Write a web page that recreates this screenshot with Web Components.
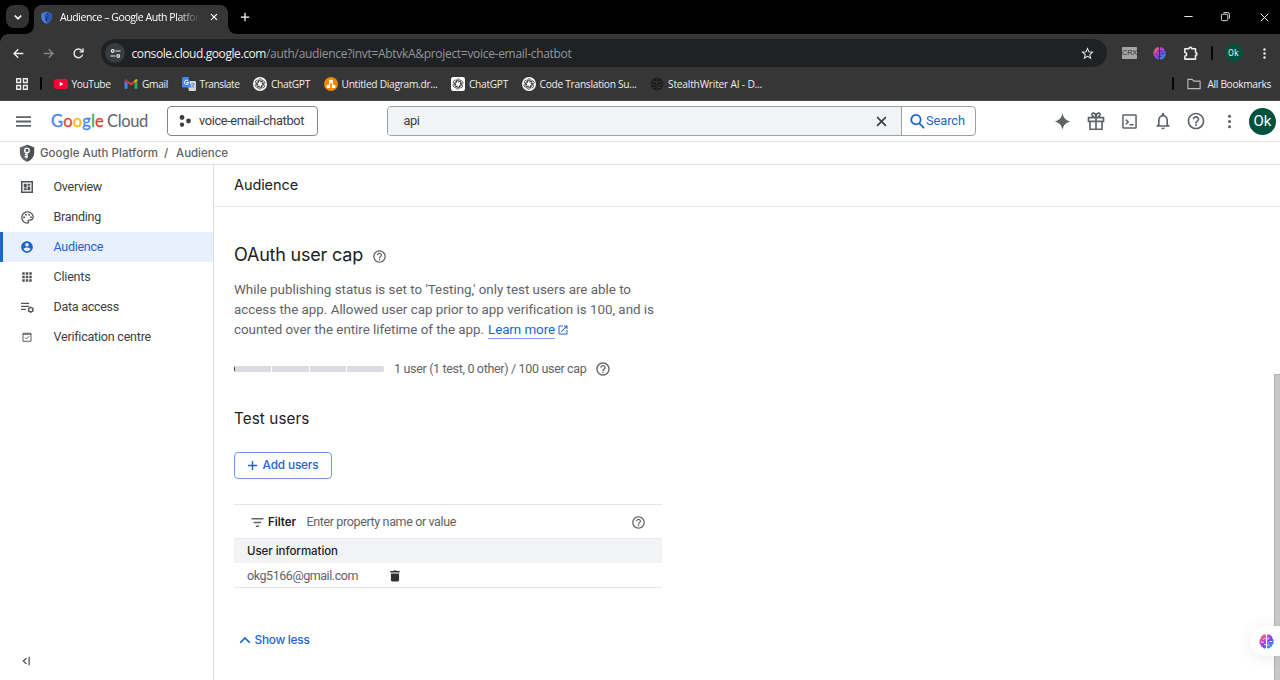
<!DOCTYPE html>
<html lang="en">
<head>
<meta charset="utf-8">
<title>Audience – Google Auth Platform</title>
<style>
body{margin:0;width:1280px;height:680px;overflow:hidden;background:#fff;font-family:Roboto,sans-serif}
</style>
</head>
<body>
<app-shell></app-shell>
<script>
const brain = id => `<defs><linearGradient id="${id}" x1="0" y1="0" x2="1" y2="1"><stop offset=".1" stop-color="#ff7a3c"/><stop offset=".35" stop-color="#c63fd8"/><stop offset=".62" stop-color="#6a4df0"/><stop offset=".9" stop-color="#20b4f5"/></linearGradient></defs>
<path fill="url(#${id})" d="M11 1.500C9.300-.3 6.600.3 6 2.500 3.500 2.700 2.300 5 3 7 .8 8 .2 10.300 1.200 12c-1 1.900-.3 4.400 1.800 5.200-.2 2.300 1.200 4 3.300 4.100.8 2.300 3.300 2.600 4.700.9zM13 1.500c1.700-1.800 4.600-1.200 5.200 1 2.500.2 3.700 2.500 3 4.500 2.200 1 2.800 3.300 1.800 5 1 1.900.3 4.400-1.800 5.200.2 2.300-1.200 4-3.300 4.100-.8 2.300-3.500 2.600-4.900.9z"/><g fill="none" stroke="var(--gap,#363636)" stroke-width="1.300"><path d="M11 7.500H8.500L6.500 9M3 13h5M11 17H8M13 8h2.500V5.500M21 12h-4l-2 2M13 17.500h4"/></g>`;
const knot = (bg, fg, r) => `<rect x="0" y="0" width="24" height="24" rx="${r}" fill="${bg}"/><g fill="none" stroke="${fg}" stroke-width="1.300">${[0,60,120,180,240,300].map(a=>`<path transform="rotate(${a} 12 12)" d="M9.200 10.300V6.500a3.500 3.500 0 0 1 6.600-1.500M9.200 7.500 12 5.900l4.200 2.400"/>`).join('')}</g>`;
const ICONS = {
 down:'<path d="m6.500 9.500 5.500 5.500 5.500-5.500" fill="none" stroke="currentColor" stroke-width="2.800"/>',
 close:'<path d="M5 5l14 14M19 5 5 19" fill="none" stroke="currentColor" stroke-width="var(--sw,2.200)"/>',
 plus:'<path d="M12 2v20M2 12h20" fill="none" stroke="currentColor" stroke-width="3"/>',
 shield:'<path d="M12 1 2.500 4.500V11c0 6 4 10.500 9.500 12.500 5.500-2 9.500-6.500 9.500-12.500V4.500z" fill="var(--a,#5f6368)"/><path d="M12 1v22.500C17.500 21.500 21.500 17 21.500 11V4.500z" fill="var(--b,#4b4f53)"/><circle cx="12" cy="8.500" r="3" fill="none" stroke="var(--c,#fff)" stroke-width="1.800"/><path d="M12 11.500V19M12 14H9M12 17H9" stroke="var(--c,#fff)" stroke-width="1.800"/>',
 min:'<path d="M3 12h18" stroke="currentColor" stroke-width="2"/>',
 restore:'<g fill="none" stroke="currentColor" stroke-width="1.900"><rect x="3" y="7" width="14" height="14" rx="2.500"/><path d="M7.500 3.500H17a3.500 3.500 0 0 1 3.500 3.500v9.500"/></g>',
 back:'<path d="M21 12H4M11.500 4 3.700 12l7.800 8" fill="none" stroke="currentColor" stroke-width="2.500"/>',
 fwd:'<path d="M3 12h17M12.500 4l7.800 8-7.800 8" fill="none" stroke="currentColor" stroke-width="2.500"/>',
 reload:'<path d="M19.500 14A8 8 0 1 1 18 6.700L20.500 9" fill="none" stroke="currentColor" stroke-width="2.500"/><path d="M21.500 2.500V10H14V8h5.200V2.500z" fill="currentColor"/>',
 tune:'<g fill="none" stroke="currentColor" stroke-width="2.400"><circle cx="6" cy="6.500" r="3"/><path d="M12 6.500h11M1 17.500h11"/><circle cx="18" cy="17.500" r="3"/></g>',
 star:'<path d="M22 9.240l-7.190-.62L12 2 9.190 8.630 2 9.240l5.460 4.730L5.820 21 12 17.270 18.180 21l-1.630-7.030L22 9.240zM12 15.400l-3.760 2.270 1-4.280-3.320-2.880 4.380-.38L12 6.100l1.710 4.040 4.380.38-3.320 2.880 1 4.280z" fill="currentColor"/>',
 puzzle:'<path d="M3 4.500h6.500a2.300 2.300 0 1 1 4.600 0H20v5.800a2.300 2.300 0 1 1 0 4.600V21H3v-5a2.800 2.800 0 0 0 0-5.600z" fill="none" stroke="currentColor" stroke-width="2.500" stroke-linejoin="round"/>',
 kebab:'<g fill="currentColor"><circle cx="12" cy="4.500" r="2.200"/><circle cx="12" cy="12" r="2.200"/><circle cx="12" cy="19.500" r="2.200"/></g>',
 apps4:'<g fill="none" stroke="currentColor" stroke-width="2.400"><path d="M3 3h6.500v6.500H3zM14.500 3H21v6.500h-6.500zM3 14.500h6.500V21H3zM14.500 14.500H21V21h-6.500z"/></g>',
 yt:'<rect y="3.500" width="24" height="17" rx="4.500" fill="#f03"/><path d="m9.700 8.300 6.300 3.700-6.300 3.700z" fill="#fff"/>',
 gmail:'<path d="M1 20V6l5 3.800V20z" fill="#4285f4"/><path d="M23 20V6l-5 3.800V20z" fill="#34a853"/><path d="m1 6 2.500-2L12 10.500 20.500 4 18 9.800l-6 4.700-6-4.700z" fill="#ea4335"/><path d="M18 9.800V5.900l2-1.500C21.500 3.300 23 4.300 23 6z" fill="#fbbc04"/><path d="M6 9.800V5.900L4 4.400C2.500 3.300 1 4.300 1 6z" fill="#c5221f"/>',
 translate:'<path d="M8 7h14a2 2 0 0 1 2 2v13a2 2 0 0 1-2 2H12z" fill="#d5d9de"/><path d="M2 0h9l5 18H2a2 2 0 0 1-2-2V2a2 2 0 0 1 2-2z" fill="#4285f4"/><path d="M11.500 9.200H7.300M11.300 9.200a3.600 3.600 0 1 1-1.300-3" fill="none" stroke="#fff" stroke-width="1.600"/><path d="M15 12h7M18.500 10v2M20.500 12c-.5 3-2.500 5-4.500 6M17 14l4 5" fill="none" stroke="#5f7fae" stroke-width="1.400"/>',
 gpt: knot('#fff','#222',12), gptsq: knot('#fff','#222',4),
 stealth:'<circle cx="12" cy="12" r="11" fill="#1b1b1b"/><g fill="none" stroke="#444" stroke-width="1.200"><path d="M12 2v20M3 8h6l2 2M2 13h5l3 3M5 18h4M21 8h-5l-3 3M22 13h-5l-2 3M19 18h-5"/></g>',
 drawio:'<circle cx="12" cy="12" r="12" fill="#f08705"/><path d="M12 8 7.500 15M12 8l4.500 7" stroke="#fff" stroke-width="2"/><g fill="#fff"><rect x="9" y="4.500" width="6" height="5.500" rx="1"/><rect x="4.500" y="13.500" width="6" height="5.500" rx="1"/><rect x="13.500" y="13.500" width="6" height="5.500" rx="1"/></g>',
 folder:'<path d="M1.500 4h7.500l2.500 3h11v13h-21z" fill="none" stroke="currentColor" stroke-width="1.900" stroke-linejoin="round"/>',
 brain: brain('bg'),
 menu:'<path d="M0 5h24M0 12h24M0 19h24" stroke="currentColor" stroke-width="3"/>',
 project:'<g fill="currentColor"><circle cx="6" cy="5" r="4.800"/><circle cx="19" cy="12" r="4.800"/><circle cx="6" cy="19.500" r="4.300"/></g>',
 search:'<g fill="none" stroke="currentColor" stroke-width="2.900"><circle cx="9.500" cy="9" r="7.500"/><path d="m14.500 14.500 8 8"/></g>',
 spark:'<path d="M12 0c1 7 5 11 12 12-7 1-11 5-12 12-1-7-5-11-12-12 7-1 11-5 12-12z" fill="currentColor"/>',
 gift:'<g fill="none" stroke="currentColor" stroke-width="2.200"><path d="M2 7.500h20v5H2zM4 12.500h16V23H4zM12 7.500V23M12 7.500C6.500 7.500 5 1.500 8.300 1.500 11 1.500 12 5 12 7.500zM12 7.500c5.500 0 7-6 3.700-6C13 1.500 12 5 12 7.500z"/></g>',
 shell:'<g fill="none" stroke="currentColor" stroke-width="2.400"><rect x="1.500" y="1.500" width="21" height="21" rx="1"/><path d="m6 9 4 3.700-4 3.800M12 17h6.500"/></g>',
 bell:'<path d="M12 22c1.100 0 2-.9 2-2h-4c0 1.100.9 2 2 2zm6-6v-5c0-3.070-1.630-5.640-4.500-6.320V4c0-.83-.67-1.500-1.500-1.500s-1.500.67-1.500 1.500v.68C7.640 5.360 6 7.920 6 11v5l-2 2v1h16v-1zm-2 1H8v-6c0-2.480 1.510-4.500 4-4.500s4 2.020 4 4.500z" fill="currentColor"/>',
 help:'<path d="M11 18h2v-2h-2v2zm1-16C6.480 2 2 6.480 2 12s4.480 10 10 10 10-4.480 10-10S17.520 2 12 2zm0 18c-4.410 0-8-3.590-8-8s3.590-8 8-8 8 3.590 8 8-3.590 8-8 8zm0-14c-2.210 0-4 1.790-4 4h2c0-1.100.9-2 2-2s2 .9 2 2c0 2-3 1.750-3 5h2c0-2.250 3-2.500 3-5 0-2.210-1.790-4-4-4z" fill="currentColor"/>',
 overview:'<path d="M1.500 1.500h21v21h-21z" fill="none" stroke="currentColor" stroke-width="3"/><path d="M5.500 5.500h6v7.500h-6zM13 5.500h5.500v4H13zM13 11h5.500v7.500H13zM5.500 14.500h6v4h-6z" fill="currentColor"/>',
 palette:'<path d="M12 22C6.490 22 2 17.510 2 12S6.490 2 12 2s10 4.040 10 9c0 3.310-2.690 6-6 6h-1.770c-.28 0-.5.22-.5.5 0 .12.050.23.13.33.41.47.64 1.060.64 1.670 0 1.380-1.120 2.500-2.500 2.500zm0-18c-4.410 0-8 3.590-8 8s3.590 8 8 8c.28 0 .5-.22.5-.5 0-.16-.08-.28-.14-.35-.41-.46-.63-1.050-.63-1.650 0-1.380 1.120-2.500 2.500-2.500H16c2.210 0 4-1.790 4-4 0-3.860-3.590-7-8-7z" fill="currentColor"/><g fill="currentColor"><circle cx="6.500" cy="11.500" r="1.500"/><circle cx="9.500" cy="7.500" r="1.500"/><circle cx="14.500" cy="7.500" r="1.500"/><circle cx="17.500" cy="11.500" r="1.500"/></g>',
 account:'<path d="M12 2C6.480 2 2 6.480 2 12s4.480 10 10 10 10-4.480 10-10S17.520 2 12 2zm0 3c1.660 0 3 1.340 3 3s-1.340 3-3 3-3-1.340-3-3 1.340-3 3-3zm0 14.200c-2.500 0-4.710-1.280-6-3.220.03-1.990 4-3.080 6-3.080 1.990 0 5.970 1.090 6 3.080-1.290 1.940-3.500 3.220-6 3.220z" fill="currentColor"/>',
 grid9:'<path d="M2.500 2.500h5v5h-5zM9.500 2.500h5v5h-5zM16.500 2.500h5v5h-5zM2.500 9.500h5v5h-5zM9.500 9.500h5v5h-5zM16.500 9.500h5v5h-5zM2.500 16.500h5v5h-5zM9.500 16.500h5v5h-5zM16.500 16.500h5v5h-5z" fill="currentColor"/>',
 data:'<path d="M0 4.500h15M0 10h15M0 15.500h9" stroke="currentColor" stroke-width="2.200"/><circle cx="18" cy="16" r="3.900" fill="none" stroke="currentColor" stroke-width="2.400"/><path d="M18 10v2M18 20v2M12.800 13l1.800 1M21.400 18l1.800 1M12.800 19l1.800-1M21.400 14l1.800-1" stroke="currentColor" stroke-width="2.200"/>',
 verify:'<path d="M4 4.500h16v16H4zM4 6.500h16M8 13l2.800 2.800L16 10.500" fill="none" stroke="currentColor" stroke-width="1.900"/>',
 collapse:'<path d="m13 5-7.500 7 7.500 7M19.500 2v20" fill="none" stroke="currentColor" stroke-width="2.800"/>',
 open:'<path d="M19 19H5V5h7V3H5a2 2 0 0 0-2 2v14a2 2 0 0 0 2 2h14c1.100 0 2-.9 2-2v-7h-2zM14 3v2h3.590l-9.830 9.830 1.410 1.410L19 6.410V10h2V3z" fill="currentColor"/>',
 filter:'<path d="M1 5h22M5 12h14M9 19h6" stroke="currentColor" stroke-width="2.700"/>',
 trash:'<path d="M5 19c0 1.400.9 2.500 2.300 2.500h9.400c1.400 0 2.300-1.100 2.300-2.500V7.800H5zM20 3.600h-4.500l-1-1h-5l-1 1H4v2.500h16z" fill="currentColor"/>',
 up:'<path d="m2.500 17.500 9.500-9.500 9.500 9.500" fill="none" stroke="currentColor" stroke-width="3.400"/>'
};

function define(name, css, html) {
  const t = document.createElement('template');
  t.innerHTML = `<style>:host{box-sizing:border-box;display:block}*{box-sizing:border-box}${css}</style>${html}`;
  customElements.define(name, class extends HTMLElement {
    constructor(){ super(); this.attachShadow({mode:'open'}).append(t.content.cloneNode(true)); }
  });
}

/* Square icon: name, size (px) */
customElements.define('ui-icon', class extends HTMLElement {
  connectedCallback(){
    if (this.shadowRoot) return;
    const s = this.getAttribute('size') || 16;
    this.attachShadow({mode:'open'}).innerHTML =
      `<style>:host{display:block;flex:none;width:${s}px;height:${s}px}svg{display:block;width:100%;height:100%;overflow:visible}</style><svg viewBox="0 0 24 24">${ICONS[this.getAttribute('name')]}</svg>`;
  }
});

/* One line of text tracked so that it fills the width given in w */
customElements.define('ui-text', class extends HTMLElement {
  connectedCallback(){
    if (this.shadowRoot) return;
    const w = +this.getAttribute('w');
    this.attachShadow({mode:'open'}).innerHTML =
      `<style>:host{display:block;flex:none;width:${w}px;white-space:nowrap}span{display:inline-block}</style><span><slot></slot></span>`;
    const span = this.shadowRoot.querySelector('span');
    const n = this.textContent.length;
    const nat = span.getBoundingClientRect().width;
    if (nat && n) span.style.letterSpacing = ((w - nat) / n).toFixed(4) + 'px';
  }
});

define('browser-tabs', `
:host{height:34px;background:#000;display:flex;align-items:flex-start;padding:5px 9.500px 0 6px;color:#fff;font:10.500px/14px "Open Sans",sans-serif}
.drop{width:23px;height:23px;border-radius:8px;background:#333;display:grid;place-items:center}
.tab{margin-left:5px;width:194px;height:29px;background:#363636;border-radius:8px 8px 0 0;display:flex;align-items:center;padding:0 9px 5px 6px;position:relative}
.tab:before,.tab:after{content:"";position:absolute;bottom:0;width:8px;height:8px}
.tab:before{left:-8px;background:radial-gradient(circle at 0 0,transparent 7.500px,#363636 8px)}
.tab:after{right:-8px;background:radial-gradient(circle at 100% 0,transparent 7.500px,#363636 8px)}
.title{margin-left:7px;-webkit-mask-image:linear-gradient(90deg,#000 85%,transparent)}
.tab ui-icon:first-child{--a:#4c80e8;--b:#2c58b8;--c:#17305f}
.x{margin-left:10px}.plus{margin:7px 0 0 11.500px}
.win{margin-left:auto;display:flex;gap:26.500px;padding-top:5.500px}`,
`<div class="drop"><ui-icon name="down" size="14"></ui-icon></div>
<div class="tab"><ui-icon name="shield" size="13"></ui-icon><ui-text class="title" w="139">Audience – Google Auth Platfor</ui-text><ui-icon class="x" name="close" size="10" style="--sw:3"></ui-icon></div>
<ui-icon class="plus" name="plus" size="10"></ui-icon>
<div class="win"><ui-icon name="min" size="11"></ui-icon><ui-icon name="restore" size="11"></ui-icon><ui-icon name="close" size="13" style="--sw:1.800"></ui-icon></div>`);

define('browser-toolbar', `
:host{height:39px;background:radial-gradient(circle at 8px 8px,#363636 7.500px,#000 8px) 0 0/8px 8px no-repeat,#363636;display:flex;align-items:center;padding:0 9px 1px 12px;color:#eee;font:12px/16px "Open Sans",sans-serif}
.omni{margin-left:16px;width:1006px;height:28px;border-radius:14px;background:#202124;display:flex;align-items:center;padding:0 12px 0 4px;flex:none}
.tune{width:20px;height:20px;border-radius:50%;background:#3a3b3d;display:grid;place-items:center}
.d{margin-left:6.500px;padding-top:1px;color:#f1f1f1}.r{padding-top:1px;color:#93969a}
.star{margin-left:auto}
.crx{margin-left:15px;width:15px;height:12px;border-radius:1px;background:#a5a5a5;color:#333;font:7.500px/12px "Liberation Sans",sans-serif;flex:none}
.sep{width:2px;height:14px;background:#050505;margin-left:13px;border-radius:1px}
.av{width:18px;height:18px;border-radius:50%;background:#00513f;font:8.500px/18px Roboto,sans-serif;display:flex;justify-content:center;margin-left:12px;flex:none}`,
`<ui-icon name="back" size="13"></ui-icon><ui-icon name="fwd" size="13" style="margin-left:17px;color:#858585"></ui-icon><ui-icon name="reload" size="13" style="margin-left:17px"></ui-icon>
<div class="omni"><div class="tune"><ui-icon name="tune" size="11"></ui-icon></div><ui-text class="d" w="134.500">console.cloud.google.com</ui-text><ui-text class="r" w="305.500">/auth/audience?invt=AbtvkA&amp;project=voice-email-chatbot</ui-text><ui-icon class="star" name="star" size="15"></ui-icon></div>
<div class="crx"><ui-text w="15">CRX</ui-text></div>
<ui-icon name="brain" size="13" style="margin-left:16px"></ui-icon><ui-icon name="puzzle" size="15" style="margin-left:16.500px"></ui-icon><div class="sep"></div><div class="av"><ui-text w="11">Ok</ui-text></div><ui-icon name="kebab" size="13" style="margin-left:auto"></ui-icon>`);

customElements.define('book-mark', class extends HTMLElement {
  connectedCallback(){
    if (this.shadowRoot) return;
    this.attachShadow({mode:'open'}).innerHTML = `<style>:host{display:flex;align-items:center;gap:4px;flex:none}</style><ui-icon name="${this.getAttribute('icon')}" size="14"></ui-icon><ui-text w="${this.getAttribute('w')}">${this.textContent}</ui-text>`;
  }
});
define('bookmarks-bar', `
:host{height:28px;background:#363636;border-bottom:1px solid #4a4a4a;display:flex;align-items:center;padding:0 9px 6px 15px;color:#eee;font:10.200px/14px "Open Sans",sans-serif}
.sep{width:2px;height:13px;background:#050505;border-radius:1px}
.list{display:flex;margin-left:11.500px;gap:13.500px}
.all{margin-left:auto;display:flex;align-items:center}`,
`<ui-icon name="apps4" size="14"></ui-icon><div class="sep" style="margin-left:11px"></div>
<div class="list"><book-mark icon="yt" w="39">YouTube</book-mark><book-mark icon="gmail" w="26">Gmail</book-mark><book-mark icon="translate" w="40">Translate</book-mark><book-mark icon="gpt" w="39">ChatGPT</book-mark><book-mark icon="drawio" w="96">Untitled Diagram.dr...</book-mark><book-mark icon="gptsq" w="39">ChatGPT</book-mark><book-mark icon="gpt" w="97">Code Translation Su...</book-mark><book-mark icon="stealth" w="94">StealthWriter AI - D...</book-mark></div>
<div class="all"><div class="sep"></div><ui-icon name="folder" size="14" style="margin-left:13px;color:#bbb"></ui-icon><ui-text w="63.500" style="margin-left:7px">All Bookmarks</ui-text></div>`);

define('cloud-header', `
:host{height:41px;display:flex;align-items:center;padding:0 4px 0 16px;border-bottom:1px solid #e3e5e8;color:#5f6368;font:12.800px/16px Roboto,sans-serif}
.logo{display:flex;margin-left:20px;font:16.500px/20px Lato,sans-serif;-webkit-text-stroke:.3px}
.logo i{font-style:normal}
.proj{margin-left:19px;width:151px;height:30px;border:1px solid #80868b;border-radius:4px;display:flex;align-items:center;padding-left:11px;color:#3c4043;flex:none}
.search{margin-left:69px;width:589px;height:30px;border:1px solid #9aa0a6;border-radius:4px;display:flex;overflow:hidden;color:#3c4043;flex:none}
.field{width:513px;background:#f1f3f4;display:flex;align-items:center;justify-content:space-between;padding:0 12px 0 15.500px}
.go{flex:1;border-left:1px solid #9aa0a6;display:flex;align-items:center;color:#1a66cf;padding-left:8px}
.tools{margin-left:auto;display:flex;align-items:center}
.av{width:27px;height:27px;border-radius:50%;background:#00513f;color:#fff;display:grid;place-items:center;font:15px/27px Roboto,sans-serif}`,
`<ui-icon name="menu" size="15"></ui-icon>
<div class="logo"><ui-text w="53"><i style="color:#4285f4">G</i><i style="color:#ea4335">o</i><i style="color:#fbbc04">o</i><i style="color:#4285f4">g</i><i style="color:#34a853">l</i><i style="color:#ea4335">e</i></ui-text><ui-text w="41" style="margin-left:3px;-webkit-text-stroke:0">Cloud</ui-text></div>
<div class="proj"><ui-icon name="project" size="12"></ui-icon><ui-text w="105" style="margin-left:8px">voice-email-chatbot</ui-text></div>
<div class="search"><div class="field"><ui-text w="16">api</ui-text><ui-icon name="close" size="15" style="--sw:2.800"></ui-icon></div><div class="go"><ui-icon name="search" size="15"></ui-icon><ui-text w="39" style="margin-left:1px">Search</ui-text></div></div>
<div class="tools"><ui-icon name="spark" size="17"></ui-icon><ui-icon name="gift" size="18" style="margin-left:16px"></ui-icon><ui-icon name="shell" size="15" style="margin-left:17px"></ui-icon><ui-icon name="bell" size="20" style="margin-left:15.500px"></ui-icon><ui-icon name="help" size="20" style="margin-left:13.500px"></ui-icon><ui-icon name="kebab" size="17" style="margin-left:15px"></ui-icon><div class="av" style="margin-left:11px"><ui-text w="18">Ok</ui-text></div></div>`);

define('bread-crumb', `
:host{height:23px;border-bottom:1px solid #e3e5e8;display:flex;align-items:center;padding:0 0 0 17.500px;color:#5f6368;font:500 11.500px/16px Inter,sans-serif}`,
`<ui-icon name="shield" size="18"></ui-icon><ui-text w="118" style="margin-left:4.500px">Google Auth Platform</ui-text><ui-text w="5" style="margin-left:6px">/</ui-text><ui-text w="52" style="margin-left:7px">Audience</ui-text>`);

customElements.define('nav-item', class extends HTMLElement {
  connectedCallback(){
    if (this.shadowRoot) return;
    const s = +this.getAttribute('size') || 14;
    this.attachShadow({mode:'open'}).innerHTML = `<style>:host{display:flex;align-items:center;height:30px;box-sizing:border-box;padding-left:20px;color:#3c4043}
:host([active]){background:#e8f0fe;color:#1a66cf;border-left:3.500px solid #1a66cf;padding-left:17px}.i{width:14px;display:flex;justify-content:center;color:#505357}:host([active]) .i{color:inherit}ui-text{margin-left:19.500px}</style><div class="i"><ui-icon name="${this.getAttribute('icon')}" size="${s}"></ui-icon></div><ui-text w="${this.getAttribute('w')}">${this.textContent}</ui-text>`;
  }
});
define('side-nav', `
:host{width:214px;border-right:1px solid #dadce0;padding:7px 0 14px;display:flex;flex-direction:column;font:12.500px/16px Roboto,sans-serif;flex:none}
.c{margin:auto 0 0 21px;color:#3c4043}`,
`<nav-item icon="overview" size="12" w="48.500">Overview</nav-item><nav-item icon="palette" size="15" w="47.500">Branding</nav-item><nav-item icon="account" size="14" w="49.500" active>Audience</nav-item><nav-item icon="grid9" size="12" w="37">Clients</nav-item><nav-item icon="data" size="13" w="65.500">Data access</nav-item><nav-item icon="verify" size="12" w="97">Verification centre</nav-item>
<div class="c"><ui-icon name="collapse" size="10"></ui-icon></div>`);

define('user-table', `
:host{width:428px;border-top:1px solid #e3e5e8;color:#5f6368}
.f{height:34px;display:flex;align-items:center;padding:1px 16px 0 17px;border-bottom:1px solid #e8eaed}
.h{height:24px;background:#f1f3f4;padding:0 13px;font:500 11.500px/24px Inter,sans-serif;color:#202124}
.r{height:25px;display:flex;align-items:center;padding:1px 13px 0;border-bottom:1px solid #e3e5e8}`,
`<div class="f"><ui-icon name="filter" size="13"></ui-icon><ui-text w="28" style="margin-left:4px;font:600 11.500px/16px Inter,sans-serif;color:#202124">Filter</ui-text><ui-text w="149.500" style="margin-left:10.500px">Enter property name or value</ui-text><ui-icon name="help" size="15" style="margin-left:auto"></ui-icon></div>
<div class="h"><ui-text w="91">User information</ui-text></div>
<div class="r"><ui-text w="111">okg5166@gmail.com</ui-text><ui-icon name="trash" size="14" style="margin-left:29.500px;color:#303134"></ui-icon></div>`);

define('audience-page', `
:host{flex:1;font:13.400px/20px Roboto,sans-serif;color:#5f6368;position:relative}
.t{height:42px;border-bottom:1px solid #e8eaed;padding:10px 20px;font:14.500px/20px Inter,sans-serif;color:#202124}
.b{padding:36px 20px 0}
h2{margin:0;display:flex;align-items:center;font:400 18px/24px Inter,sans-serif;color:#202124}
h2 ui-icon,.cap ui-icon{color:#5f6368}
.p{margin-top:13px}.l{display:flex;align-items:flex-start;height:20px}
a{color:#1a66cf;border-bottom:1px solid #7aa7e8;height:19px;line-height:20px;margin-left:4px}
.cap{display:flex;align-items:center;margin-top:19px;height:20px}
.bar{display:grid;grid-template-columns:repeat(4,1fr);gap:1px;width:150px;height:6px;margin-right:10px;border-radius:2px;overflow:hidden}
.bar i{background:#dadce0}.bar i:first-child{border-left:1px solid #3c4043}
h3{margin:29px 0 0;font:400 15.200px/22px Inter,sans-serif;color:#202124}
.btn{margin-top:22px;width:98px;height:27px;border:1px solid #6f9ade;border-radius:4px;display:flex;align-items:center;padding:0 0 1px 12px;color:#1a66cf;font:500 11.800px/16px Inter,sans-serif}
user-table{margin-top:25px}
.less{margin-top:44px;padding-left:4.500px;display:flex;align-items:center;color:#1a66cf;font:500 11.800px/16px Inter,sans-serif}
.scroll{position:absolute;right:0;top:209px;bottom:0;width:6px;background:#c8c8c8;border-left:1px solid #b0b0b0;border-top:1px solid #b0b0b0}
.fab{position:absolute;right:0;top:461px;width:30px;height:30px;border-radius:15px 0 0 15px;background:#fff;box-shadow:0 2px 16px rgba(0,0,0,.08);display:flex;align-items:center;padding-left:8.500px;--gap:#fff}`,
`<div class="t"><ui-text w="64">Audience</ui-text></div>
<div class="b"><h2><ui-text w="129">OAuth user cap</ui-text><ui-icon name="help" size="15" style="margin:3px 0 0 9px"></ui-icon></h2>
<div class="p"><ui-text w="397">While publishing status is set to 'Testing,' only test users are able to</ui-text><ui-text w="419.500">access the app. Allowed user cap prior to app verification is 100, and is</ui-text><div class="l"><ui-text w="250">counted over the entire lifetime of the app.</ui-text><a><ui-text w="67">Learn more</ui-text></a><ui-icon name="open" size="12" style="margin:4px 0 0 2px;color:#1a66cf"></ui-icon></div></div>
<div class="cap"><div class="bar"><i></i><i></i><i></i><i></i></div><ui-text w="192.500" style="font-size:12.500px">1 user (1 test, 0 other) / 100 user cap</ui-text><ui-icon name="help" size="16" style="margin-left:8px"></ui-icon></div>
<h3><ui-text w="75.500">Test users</ui-text></h3>
<div class="btn"><ui-icon name="plus" size="11"></ui-icon><ui-text w="56" style="margin-left:4.500px">Add users</ui-text></div>
<user-table style="font-size:12.500px"></user-table>
<div class="less"><ui-icon name="up" size="12"></ui-icon><ui-text w="55" style="margin-left:4px">Show less</ui-text></div></div>
<div class="scroll"></div><div class="fab"><ui-icon name="brain" size="15"></ui-icon></div>`);

define('app-shell', `
:host{width:1280px;height:680px;display:flex;flex-direction:column;overflow:hidden}
.body{flex:1;display:flex;min-height:0}`,
`<browser-tabs></browser-tabs><browser-toolbar></browser-toolbar><bookmarks-bar></bookmarks-bar><cloud-header></cloud-header><bread-crumb></bread-crumb><div class="body"><side-nav></side-nav><audience-page></audience-page></div>`);
</script>
</body>
</html>
